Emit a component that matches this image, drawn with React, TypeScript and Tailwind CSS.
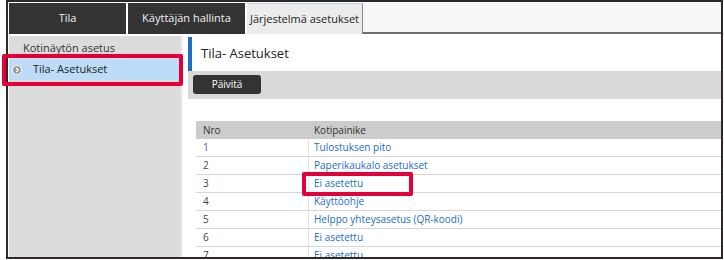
import React from "react";

const rows = [
  { nro: "1", label: "Tulostuksen pito", nroClass: "text-[#3d5fa6]" },
  { nro: "2", label: "Paperikaukalo asetukset", nroClass: "text-[#444]" },
  { nro: "3", label: "Ei asetettu", nroClass: "text-[#444]" },
  { nro: "4", label: "Käyttöohje", nroClass: "text-[#5a3a2a]" },
  { nro: "5", label: "Helppo yhteysasetus (QR-koodi)", nroClass: "text-[#444]" },
  { nro: "6", label: "Ei asetettu", nroClass: "text-[#444]" },
  { nro: "7", label: "Ei asetettu", nroClass: "text-[#444]" },
];

export default function App() {
  return (
    <div className="w-[724px] h-[260px] bg-white font-['Open_Sans',sans-serif] relative overflow-hidden">
      {/* Outer frame */}
      <div className="ml-[6px] w-[717px] h-[259px] border-2 border-[#2e2828] flex flex-col overflow-hidden">
        {/* Tab row */}
        <div className="flex h-[32px] shrink-0 pt-[1px]">
          <div className="ml-[1px] w-[117px] bg-[#333333] text-[#f2f2f2] text-[11px] flex items-center justify-center">
            Tila
          </div>
          <div className="ml-[2px] w-[117px] bg-[#333333] text-[#f2f2f2] text-[11px] flex items-center justify-center">
            Käyttäjän hallinta
          </div>
          <div className="ml-[2px] w-[116px] bg-[#ececec] border-t border-[#bcd4ea] border-r border-r-[#8a8a8a] text-[#222] text-[11px] flex items-center justify-center">
            Järjestelmä asetukset
          </div>
          <div className="flex-1 bg-[#f7f7f7] border-b-2 border-[#6e6e6e]" />
        </div>

        {/* Body */}
        <div className="flex flex-1 mt-[2px] min-h-0">
          {/* Sidebar */}
          <div className="w-[172px] ml-[1px] bg-[#dcdcdc] shrink-0 pt-[1px]">
            <div className="h-[22px] flex items-center pl-[14px] text-[11px] text-[#333]">
              Kotinäytön asetus
            </div>
            <div className="h-[21px] mr-[2px] bg-[#bddcf8] flex items-center text-[11px] text-[#222]">
              <span className="ml-[3px] w-[10px] h-[10px] rounded-full bg-[#9a9a9a] border border-white flex items-center justify-center">
                <svg viewBox="0 0 10 10" className="w-[8px] h-[8px]">
                  <path d="M4 2.5 L6.5 5 L4 7.5" fill="none" stroke="white" strokeWidth="1.6" />
                </svg>
              </span>
              <span className="ml-[11px]">Tila- Asetukset</span>
            </div>
          </div>
          <div className="w-[2px] bg-[#efefef] shrink-0" />

          {/* Main */}
          <div className="flex-1 pl-[5px] flex flex-col min-w-0">
            <div className="h-[34px] flex items-stretch shrink-0 mt-[1px]">
              <div className="w-[4px] bg-[#1d6fc0]" />
              <div className="flex-1 flex items-center pl-[9px] text-[13px] text-[#222]">
                Tila- Asetukset
              </div>
            </div>
            <div className="h-[28px] bg-[#d9d9d9] flex items-start pt-[4px] pl-[5px] shrink-0">
              <button className="w-[68px] h-[19px] rounded-[3px] bg-[#333333] text-white text-[10px] flex items-center justify-center">
                Päivitä
              </button>
            </div>

            <div className="mt-[22px] ml-[8px]">
              <div className="flex h-[18px] bg-[#cccccc] text-[10px] text-[#333] items-center">
                <div className="w-[113px] pl-[7px]">Nro</div>
                <div className="flex-1 pl-[5px]">Kotipainike</div>
              </div>
              {rows.map((r) => (
                <div key={r.nro} className="flex h-[18px] text-[10px] border-b border-[#d6d6d6]">
                  <div className={`w-[113px] pl-[7px] flex items-center border-r border-[#e2e2e2] ${r.nroClass}`}>
                    {r.nro}
                  </div>
                  <div className="flex-1 pl-[5px] flex items-center text-[#1a6dc8]">{r.label}</div>
                </div>
              ))}
            </div>
          </div>
        </div>
      </div>

      {/* Red annotation boxes */}
      <div className="absolute left-[2px] top-[54px] w-[181px] h-[32px] border-4 border-[#e3003a] rounded-[2px]" />
      <div className="absolute left-[302px] top-[172px] w-[111px] h-[24px] border-4 border-[#e3003a] rounded-[2px]" />
    </div>
  );
}
